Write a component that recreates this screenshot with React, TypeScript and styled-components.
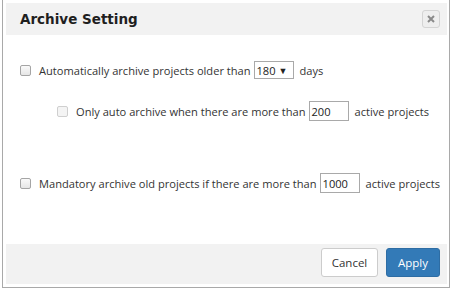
import { createGlobalStyle, styled } from 'styled-components'

const GlobalStyle = createGlobalStyle`
  html, body {
    margin: 0;
    padding: 0;
    background: #ffffff;
  }
  body {
    font-family: 'Open Sans', 'Liberation Sans', sans-serif;
  }
`

const Frame = styled.div`
  width: 452px;
  height: 290px;
  box-sizing: border-box;
  padding: 0 2px 2px 2px;
  background: #ffffff;
`

const Dialog = styled.div`
  height: 100%;
  box-sizing: border-box;
  border: 1px solid #a9a9a9;
  border-top: none;
  padding: 3px 2px 3px 3px;
  display: flex;
  flex-direction: column;
`

const Header = styled.div`
  height: 32px;
  background: #f2f2f2;
  display: flex;
  align-items: center;
  justify-content: space-between;
  padding: 0 7px 0 14px;
`

const Title = styled.h1`
  margin: 0;
  font-family: 'DejaVu Sans', Verdana, sans-serif;
  font-size: 13.5px;
  font-weight: bold;
  color: #1f1f1f;
`

const CloseButton = styled.button`
  width: 18px;
  height: 18px;
  padding: 0;
  border: 1px solid #d4d4d4;
  border-radius: 3px;
  background: #eeeeee;
  display: flex;
  align-items: center;
  justify-content: center;
`

const Body = styled.div`
  flex: 1;
  padding: 25px 0 0 14px;
  font-size: 11.1px;
  color: #333333;
`

const Row = styled.div<{ $indent?: number; $gap?: number }>`
  display: flex;
  align-items: center;
  height: 20px;
  margin-left: ${(p) => p.$indent ?? 0}px;
  margin-bottom: ${(p) => p.$gap ?? 0}px;
`

const Check = styled.span<{ $disabled?: boolean }>`
  width: 9px;
  height: 9px;
  border: 1px solid ${(p) => (p.$disabled ? '#cfcfcf' : '#a5a5a5')};
  border-radius: 2px;
  background: ${(p) => (p.$disabled ? '#f4f4f4' : 'linear-gradient(#fafafa, #e6e6e6)')};
  margin-right: 8px;
  flex-shrink: 0;
`

const Label = styled.span`
  white-space: nowrap;
`

const Field = styled.span<{ $width: number; $height?: number }>`
  display: inline-flex;
  align-items: center;
  justify-content: space-between;
  box-sizing: border-box;
  width: ${(p) => p.$width}px;
  height: ${(p) => p.$height ?? 20}px;
  border: 1px solid #a9a9a9;
  padding: 0 5px 0 2px;
  margin: 0 6px 0 3px;
  color: #222222;
  background: #ffffff;
`

const Arrow = styled.span`
  font-size: 9px;
  color: #222222;
`

const Footer = styled.div`
  height: 40px;
  background: #f2f2f2;
  display: flex;
  align-items: flex-start;
  justify-content: flex-end;
  gap: 8px;
  padding: 4px 7px 0 0;
  box-sizing: border-box;
`

const Button = styled.button<{ $primary?: boolean; $width: number }>`
  width: ${(p) => p.$width}px;
  height: 29px;
  padding: 0;
  font-family: 'Open Sans', 'Liberation Sans', sans-serif;
  font-size: 11.5px;
  border-radius: 3px;
  border: 1px solid ${(p) => (p.$primary ? '#2e6da4' : '#cccccc')};
  background: ${(p) => (p.$primary ? '#337ab7' : '#ffffff')};
  color: ${(p) => (p.$primary ? '#ffffff' : '#333333')};
`

export default function App() {
  return (
    <Frame>
      <GlobalStyle />
      <Dialog>
        <Header>
          <Title>Archive Setting</Title>
          <CloseButton aria-label="Close">
            <svg width="8" height="8" viewBox="0 0 8 8">
              <path d="M1 1 L7 7 M7 1 L1 7" stroke="#8a8a8a" strokeWidth="2" />
            </svg>
          </CloseButton>
        </Header>
        <Body>
          <Row $gap={21}>
            <Check />
            <Label>Automatically archive projects older than</Label>
            <Field $width={40} $height={18}>
              180 <Arrow>▼</Arrow>
            </Field>
            <Label>days</Label>
          </Row>
          <Row $indent={37} $gap={52}>
            <Check $disabled />
            <Label>Only auto archive when there are more than</Label>
            <Field $width={40}>200</Field>
            <Label>active projects</Label>
          </Row>
          <Row>
            <Check />
            <Label>Mandatory archive old projects if there are more than</Label>
            <Field $width={40}>1000</Field>
            <Label>active projects</Label>
          </Row>
        </Body>
        <Footer>
          <Button $width={57}>Cancel</Button>
          <Button $primary $width={54}>Apply</Button>
        </Footer>
      </Dialog>
    </Frame>
  )
}
